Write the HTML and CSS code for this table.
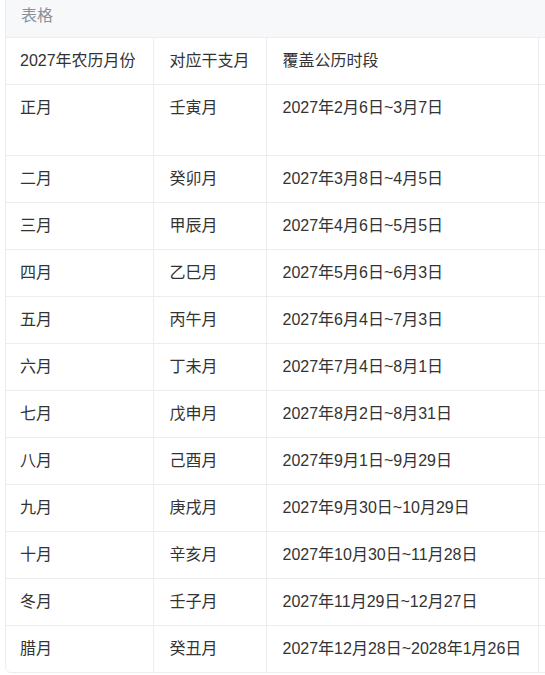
FILE: index.html
```html
<!DOCTYPE html>
<html lang="zh-CN">
<head>
<meta charset="utf-8">
<title>表格</title>
<link rel="stylesheet" href="styles.css">
</head>
<body>
<div class="frame">
<div class="card">
  <div class="card-title">表格</div>
  <table class="grid">
    <colgroup>
      <col class="c1"><col class="c2"><col class="c3"><col class="c4">
    </colgroup>
    <thead>
      <tr><th>2027年农历月份</th><th>对应干支月</th><th>覆盖公历时段</th><th></th></tr>
    </thead>
    <tbody>
      <tr class="tall"><td>正月</td><td>壬寅月</td><td>2027年2月6日~3月7日</td><td></td></tr>
      <tr><td>二月</td><td>癸卯月</td><td>2027年3月8日~4月5日</td><td></td></tr>
      <tr><td>三月</td><td>甲辰月</td><td>2027年4月6日~5月5日</td><td></td></tr>
      <tr><td>四月</td><td>乙巳月</td><td>2027年5月6日~6月3日</td><td></td></tr>
      <tr><td>五月</td><td>丙午月</td><td>2027年6月4日~7月3日</td><td></td></tr>
      <tr><td>六月</td><td>丁未月</td><td>2027年7月4日~8月1日</td><td></td></tr>
      <tr><td>七月</td><td>戊申月</td><td>2027年8月2日~8月31日</td><td></td></tr>
      <tr><td>八月</td><td>己酉月</td><td>2027年9月1日~9月29日</td><td></td></tr>
      <tr><td>九月</td><td>庚戌月</td><td>2027年9月30日~10月29日</td><td></td></tr>
      <tr><td>十月</td><td>辛亥月</td><td>2027年10月30日~11月28日</td><td></td></tr>
      <tr><td>冬月</td><td>壬子月</td><td>2027年11月29日~12月27日</td><td></td></tr>
      <tr class="last"><td>腊月</td><td>癸丑月</td><td>2027年12月28日~2028年1月26日</td><td></td></tr>
    </tbody>
  </table>
</div>
</div>
</body>
</html>
```
FILE: styles.css
```css
html, body {
  margin: 0;
  padding: 0;
  overflow: hidden;
  background: #ffffff;
}
body {
  font-family: "Liberation Sans", "Noto Sans CJK SC", sans-serif;
  color: #333333;
  font-size: 16px;
}
.frame {
  width: 100%;
  height: 675px;
  overflow: hidden;
}
.card {
  margin: -7px 0 0 5px;
  width: 640px;
  border: 1px solid #ebedf0;
  border-radius: 6px;
  overflow: hidden;
}
.card-title {
  height: 43px;
  line-height: 43px;
  padding-left: 15px;
  background: #f6f8fa;
  color: #8a9099;
  font-size: 16px;
  border-bottom: 1px solid #ebedf0;
}
.grid {
  border-collapse: collapse;
  table-layout: fixed;
  width: 638px;
}
.c1 { width: 147px; }
.c2 { width: 113px; }
.c3 { width: 272px; }
.c4 { width: 106px; }
.grid th,
.grid td {
  font-weight: normal;
  text-align: left;
  vertical-align: top;
  padding: 11px 16px;
  line-height: 24px;
  border-right: 1px solid #ebedf0;
  border-bottom: 1px solid #ebedf0;
  white-space: nowrap;
}
.grid th:first-child,
.grid td:first-child {
  padding-left: 14px;
}
.grid tr.tall td {
  padding-bottom: 35px;
}
.grid tr.last td {
  border-bottom: none;
}
```
